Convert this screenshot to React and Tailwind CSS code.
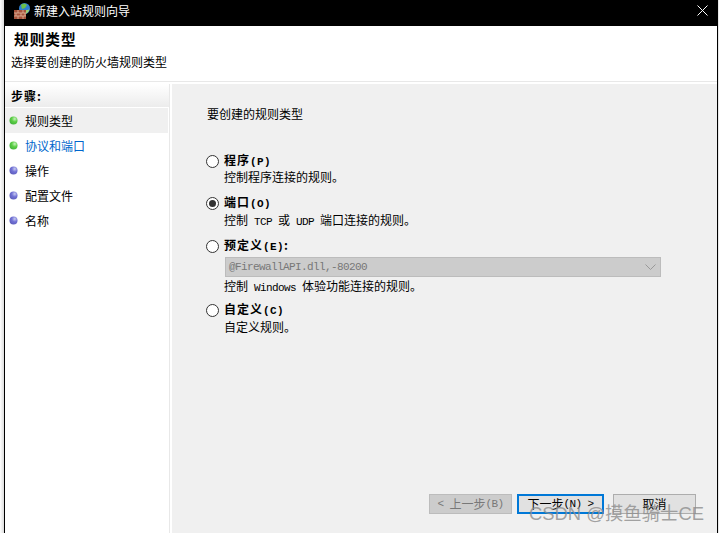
import React from "react";

function Dot({ green }) {
  return (
    <svg width="9" height="9" viewBox="0 0 9 9" className="shrink-0">
      <defs>
        <radialGradient id={green ? "g1" : "g2"} cx="0.65" cy="0.3" r="0.8">
          <stop offset="0" stopColor={green ? "#c8f0c0" : "#c8ccf0"} />
          <stop offset="0.45" stopColor={green ? "#5ccf45" : "#7272d6"} />
          <stop offset="1" stopColor={green ? "#3fae3a" : "#5a5ab8"} />
        </radialGradient>
      </defs>
      <circle cx="4.5" cy="4.5" r="4" fill={`url(#${green ? "g1" : "g2"})`} />
    </svg>
  );
}

function Step({ label, green, active, blue }) {
  return (
    <div className={`flex h-[25px] items-center pl-[4px] ${active ? "bg-[#f0f0f0]" : ""}`}>
      <Dot green={green} />
      <span className={`ml-[7px] text-[12px] ${blue ? "text-[#0066cc]" : "text-black"}`}>{label}</span>
    </div>
  );
}

function Radio({ checked }) {
  return (
    <span className="flex h-[13px] w-[13px] shrink-0 items-center justify-center rounded-full border border-[#333] bg-white">
      {checked && <span className="h-[7px] w-[7px] rounded-full bg-[#333]" />}
    </span>
  );
}

function Mono({ children }) {
  return (
    <span className="whitespace-pre font-['Liberation_Mono',monospace] text-[11px] tracking-[-0.6px]">{children}</span>
  );
}

function Option({ title, hot, suffix, checked, children }) {
  return (
    <div className="flex flex-col">
      <div className="flex h-[16px] items-center">
        <Radio checked={checked} />
        <span className="ml-[5px] text-[12px] font-bold leading-[16px] tracking-[1px] text-black">
          {title}
          <span className="font-['Liberation_Mono',monospace] text-[11px] font-bold tracking-[0.4px]">({hot})</span>
          {suffix}
        </span>
      </div>
      {children}
    </div>
  );
}

function Desc({ shifted, children }) {
  return (
    <div className={`ml-[18px] h-[15px] text-[12px] leading-[15px] text-black ${shifted ? "mt-[1px]" : ""}`}>
      {children}
    </div>
  );
}

export default function App() {
  return (
    <div className="relative flex h-[533px] w-[719px] overflow-hidden bg-[#f0f0f0] font-['Noto_Sans_CJK_SC',sans-serif]">
      <div className="w-[4px] bg-gradient-to-r from-white to-[#dcdcdc]" />
      <div className="flex min-w-0 flex-1 flex-col border-x border-black">
        <div className="flex h-[26px] shrink-0 items-center bg-black pb-[5px] pl-[8px] pr-[9px] text-white">
          <svg width="18" height="18" viewBox="0 0 18 18" className="shrink-0">
            <circle cx="11.5" cy="6.5" r="5.5" fill="#2f7fd0" />
            <path d="M8 3c2-2 5-1 6 0l-2 3-3 1z" fill="#6cc04a" />
            <path d="M13 8c1 0 3 0 3.500-1-.5 3-3 5-5 5z" fill="#9bd06e" />
            <rect x="1" y="8" width="12" height="9" fill="#a5523a" />
            <path d="M1 11h12M1 14h12M5 8v3M10 8v3M3 11v3M8 11v3M12 11v3M5 14v3M10 14v3" stroke="#e0b8a0" strokeWidth="0.8" fill="none" />
          </svg>
          <span className="ml-[3px] text-[12px]">新建入站规则向导</span>
          <svg width="11" height="11" viewBox="0 0 11 11" className="ml-auto">
            <path d="M.5.5l10 10M10.5.5l-10 10" stroke="#fff" strokeWidth="1" fill="none" />
          </svg>
        </div>

        <div className="flex h-[55px] shrink-0 flex-col bg-white">
          <div className="mt-[4px] pl-[9px] text-[14.67px] font-bold leading-[18px] tracking-[1px] text-black">规则类型</div>
          <div className="mt-[6px] pl-[6px] text-[12px] leading-[16px] text-black">选择要创建的防火墙规则类型</div>
        </div>
        <div className="h-[1px] shrink-0 bg-[#e8e8e8]" />
        <div className="h-[2px] shrink-0 bg-white" />

        <div className="flex min-h-0 flex-1">
          <div className="flex w-[167px] shrink-0 flex-col bg-white pr-[2px]">
            <div className="flex flex-1 flex-col border-r border-[#e8e8e8]">
              <div className="flex h-[23px] shrink-0 items-center bg-gradient-to-b from-white to-[#ececec] pl-[6px] text-[12px] font-bold tracking-[1px] text-black">
                步骤:
              </div>
              <div className="mr-[1px] mt-[1px] flex flex-col">
                <Step label="规则类型" green active />
                <Step label="协议和端口" green blue />
                <Step label="操作" />
                <Step label="配置文件" />
                <Step label="名称" />
              </div>
            </div>
          </div>

          <div className="flex min-w-0 flex-1 flex-col bg-[#f0f0f0] pl-[35px]">
            <div className="mt-[22px] h-[16px] text-[12px] leading-[16px] text-black">要创建的规则类型</div>

            <div className="-ml-[1px] mt-[31px] flex flex-col">
              <Option title="程序" hot="P">
                <Desc>控制程序连接的规则。</Desc>
              </Option>
              <div className="mt-[11px]">
                <Option title="端口" hot="O" checked>
                  <Desc shifted>控制<Mono> TCP </Mono>或<Mono> UDP </Mono>端口连接的规则。</Desc>
                </Option>
              </div>
              <div className="mt-[11px]">
                <Option title="预定义" hot="E" suffix=":">
                  <div className="ml-[19px] mt-[3px] flex h-[20px] w-[436px] items-center justify-between border border-[#bcbcbc] bg-[#cccccc] pl-[3px] pr-[4px]">
                    <Mono><span className="text-[#777]">@FirewallAPI.dll,-80200</span></Mono>
                    <svg width="11" height="6" viewBox="0 0 11 6">
                      <path d="M.5.5l5 5 5-5" stroke="#999" fill="none" />
                    </svg>
                  </div>
                  <Desc shifted>控制<Mono> Windows </Mono>体验功能连接的规则。</Desc>
                </Option>
              </div>
              <div className="mt-[9px]">
                <Option title="自定义" hot="C">
                  <Desc shifted>自定义规则。</Desc>
                </Option>
              </div>
            </div>

            <div className="mb-[19px] mt-auto flex items-stretch pl-[222px] text-[12px]">
              <div className="flex h-[20px] w-[83px] items-center justify-center border border-[#bcbcbc] bg-[#cccccc] text-[#787878]">
                <Mono>&lt; </Mono>上一步<Mono>(B)</Mono>
              </div>
              <div className="ml-[5px] flex h-[20px] w-[87px] items-center justify-center border-2 border-[#0078d7] bg-[#e1e1e1] text-black">
                下一步<Mono>(N) &gt;</Mono>
              </div>
              <div className="ml-[9px] flex h-[20px] w-[83px] items-center justify-center border border-[#adadad] bg-[#e1e1e1] text-black">
                取消
              </div>
            </div>
          </div>
        </div>
      </div>
      <div className="w-[1px] bg-[#e8e8e8]" />
      <div className="absolute left-[529px] top-[502px] whitespace-nowrap font-['Liberation_Sans','Noto_Sans_CJK_SC',sans-serif] text-[18.4px] leading-[24px] text-[#8c8c8c]/80">
        CSDN @摸鱼骑士CE
      </div>
    </div>
  );
}
